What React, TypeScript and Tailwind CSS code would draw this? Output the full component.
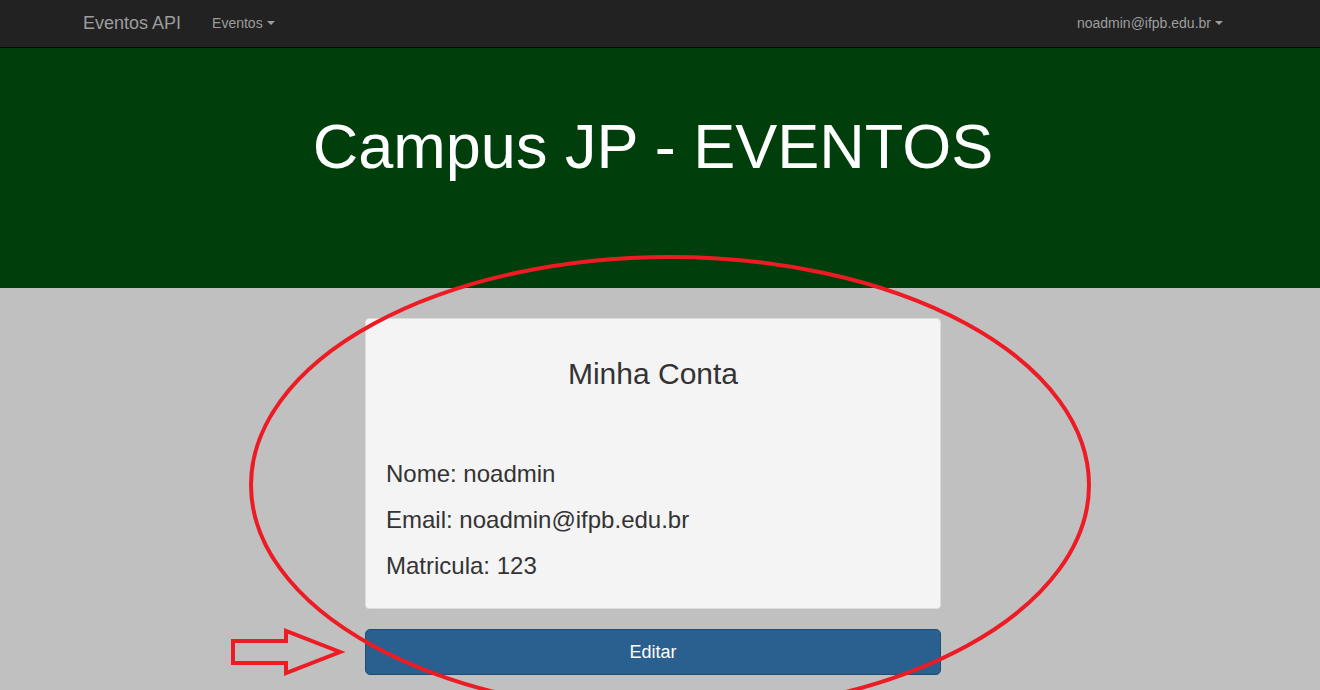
function Caret() {
  return (
    <span className="ml-[4px] inline-block h-0 w-0 border-x-[4px] border-t-[4px] border-x-transparent border-t-[#9d9d9d] align-middle" />
  );
}

function Navbar() {
  return (
    <div className="h-[48px] w-full border-b border-[#080808] bg-[#222222]">
      <div className="ml-[68px] flex h-[46px] w-[1170px] items-center">
        <span className="px-[15px] text-[18px] text-[#9d9d9d]">Eventos API</span>
        <span className="ml-[1px] flex items-center px-[15px] text-[14px] text-[#9d9d9d]">
          Eventos <Caret />
        </span>
        <span className="ml-auto flex items-center pr-[15px] text-[14px] text-[#9d9d9d]">
          noadmin@ifpb.edu.br
          <Caret />
        </span>
      </div>
    </div>
  );
}

// red hand-drawn marks on top of the page
function Annotations() {
  return (
    <svg className="pointer-events-none absolute left-0 top-0" width={1320} height={690}>
      <ellipse cx={670} cy={485} rx={419} ry={228} fill="none" stroke="#ed1c24" strokeWidth={4} />
      <polygon
        points="233,641 286,641 286,631 340,652 286,673 286,663 233,663"
        fill="none"
        stroke="#ed1c24"
        strokeWidth={4}
        strokeLinejoin="miter"
      />
    </svg>
  );
}

export default function App() {
  return (
    <div className="relative h-[690px] w-[1320px] overflow-hidden bg-[#c0c0c0] font-['Liberation_Sans',Arial,sans-serif] text-[#333333]">
      <Navbar />
      <div className="flex h-[240px] w-full items-start justify-center bg-[#003f0c]">
        <h1 className="mr-[14px] mt-[64px] text-[63px] leading-[1.1] text-white">Campus JP - EVENTOS</h1>
      </div>
      <div className="ml-[365px] w-[576px] pt-[30px]">
        <div className="h-[291px] rounded-[4px] border border-[#dcdcdc] bg-[#f4f4f4] px-[20px]">
          <h2 className="mt-[38px] text-center text-[30px] leading-[1.1]">Minha Conta</h2>
          <div className="mt-[71px] space-y-[20px] text-[24px] leading-[26px]">
            <p>Nome: noadmin</p>
            <p>Email: noadmin@ifpb.edu.br</p>
            <p>Matricula: 123</p>
          </div>
        </div>
        <button className="mt-[20px] h-[46px] w-full rounded-[5px] border border-[#204d74] bg-[#2a6090] text-[18px] text-white">
          Editar
        </button>
      </div>
      <Annotations />
    </div>
  );
}
